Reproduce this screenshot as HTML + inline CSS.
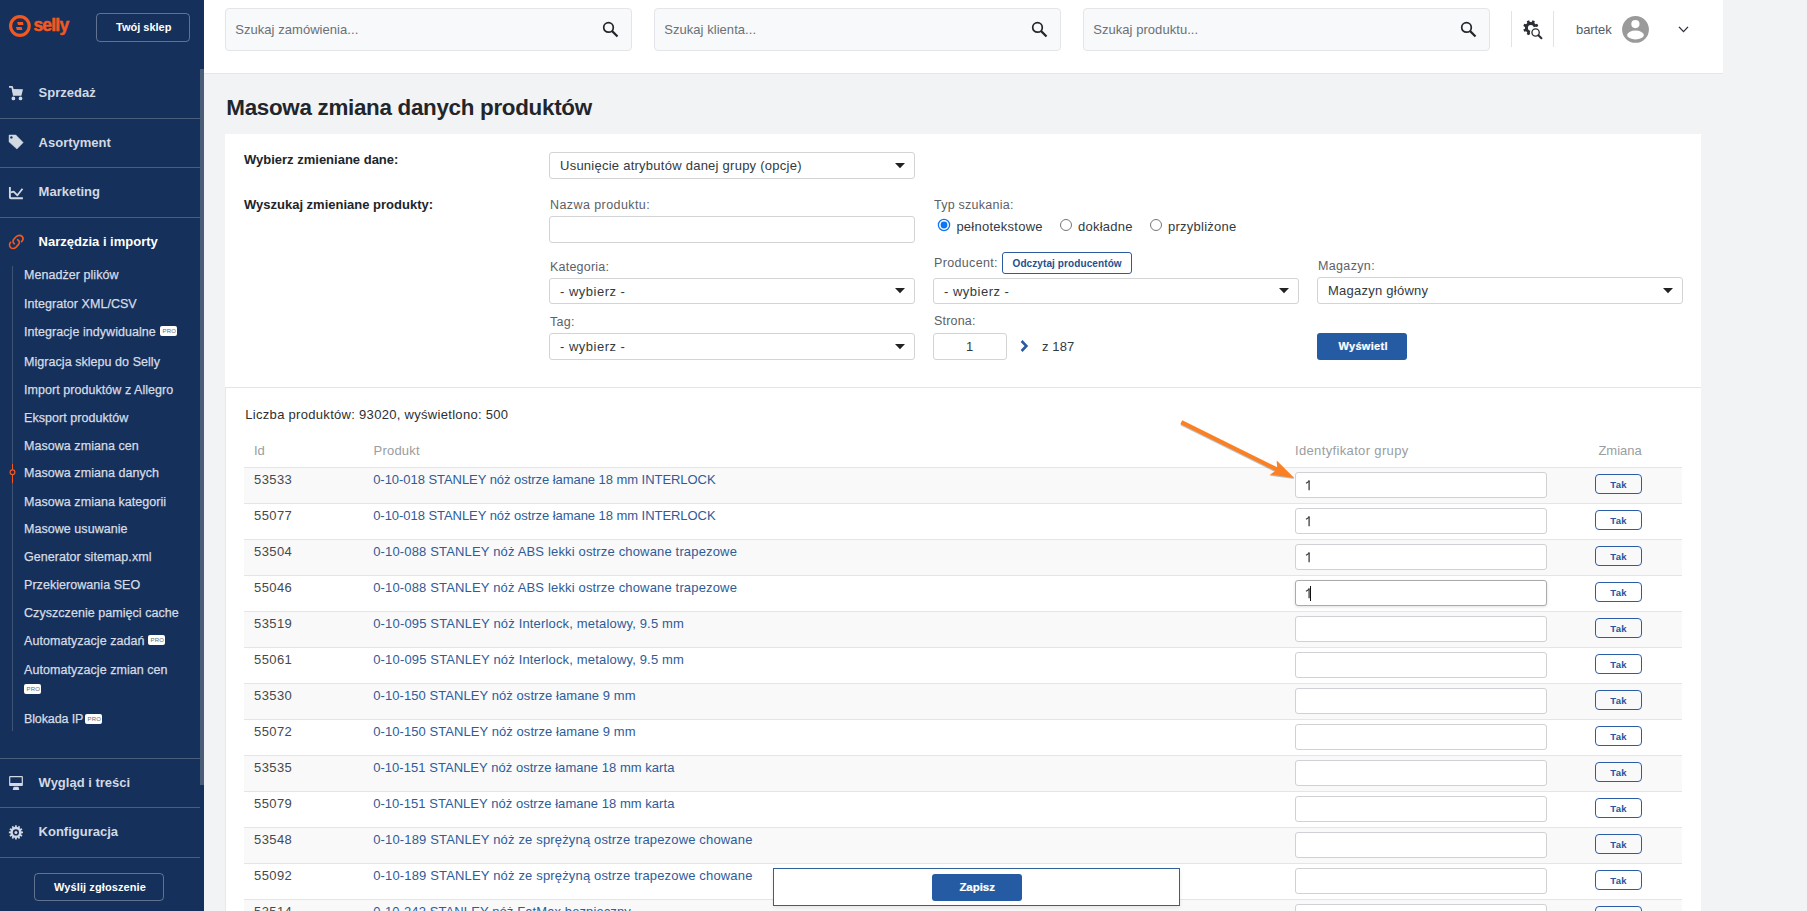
<!DOCTYPE html>
<html><head><meta charset="utf-8"><title>Masowa zmiana danych produktów</title>
<style>
html,body{margin:0;padding:0;}
body{width:1807px;height:911px;overflow:hidden;position:relative;background:#f2f3f5;font-family:"Liberation Sans", sans-serif;}
.t{position:absolute;white-space:pre;line-height:normal;}
.b{position:absolute;box-sizing:border-box;}
svg{position:absolute;overflow:visible;}
</style></head><body>
<div class="b" style="left:0px;top:0px;width:204px;height:911px;background:#15305a;"></div>
<div class="b" style="left:200px;top:69px;width:4px;height:716px;background:#495c78;"></div>
<svg style="left:0;top:0" width="80" height="50"><circle cx="19.9" cy="26" r="9.3" fill="none" stroke="#f2581f" stroke-width="3.2"/><path d="M17.2 22.0 L23.0 22.0 L23.5 24.9 L18.0 24.9 Z" fill="#f2581f"/><path d="M16.0 27.0 L21.7 27.0 L22.4 29.9 L16.8 29.9 Z" fill="#f2581f"/></svg>
<div class="t" style="left:33.4px;top:15.16px;font-size:17.5px;font-weight:bold;color:#f2581f;letter-spacing:-0.8px;-webkit-text-stroke:0.5px #f2581f;">selly</div>
<div class="b" style="left:96px;top:13px;width:94px;height:29px;border:1px solid rgba(255,255,255,0.32);border-radius:4px;"></div>
<div class="t" style="left:116px;top:20.95px;font-size:11px;font-weight:bold;color:#ffffff;letter-spacing:0px;">Twój sklep</div>
<div class="b" style="left:0px;top:118px;width:200px;height:1px;background:#4a5d7a;"></div>
<div class="b" style="left:0px;top:167px;width:200px;height:1px;background:#4a5d7a;"></div>
<div class="b" style="left:0px;top:217px;width:200px;height:1px;background:#4a5d7a;"></div>
<div class="b" style="left:0px;top:758px;width:200px;height:1px;background:#4a5d7a;"></div>
<div class="b" style="left:0px;top:807px;width:200px;height:1px;background:#4a5d7a;"></div>
<div class="b" style="left:0px;top:857px;width:200px;height:1px;background:#4a5d7a;"></div>
<div class="t" style="left:38.6px;top:85.03px;font-size:13px;font-weight:bold;color:#d3d9e2;letter-spacing:0px;">Sprzedaż</div>
<div class="t" style="left:38.6px;top:134.74px;font-size:13px;font-weight:bold;color:#d3d9e2;letter-spacing:0px;">Asortyment</div>
<div class="t" style="left:38.6px;top:184.44px;font-size:13px;font-weight:bold;color:#d3d9e2;letter-spacing:0px;">Marketing</div>
<div class="t" style="left:38.6px;top:234.13px;font-size:13px;font-weight:bold;color:#ffffff;letter-spacing:0px;">Narzędzia i importy</div>
<div class="t" style="left:38.6px;top:775.03px;font-size:13px;font-weight:bold;color:#d3d9e2;letter-spacing:0px;">Wygląd i treści</div>
<div class="t" style="left:38.6px;top:823.84px;font-size:13px;font-weight:bold;color:#d3d9e2;letter-spacing:0px;">Konfiguracja</div>
<svg style="left:9px;top:85px" width="15" height="15" viewBox="0 0 15 15"><path d="M0 1.9 L3.1 1.9 L4.4 7.5" fill="none" stroke="#d3d9e2" stroke-width="1.8" stroke-linejoin="round"/><path d="M3.1 3.9 L14 4.2 L12.4 10.8 L3.9 10.8 Z" fill="#d3d9e2"/><circle cx="4.4" cy="13.4" r="1.85" fill="#d3d9e2"/><circle cx="11.5" cy="13.4" r="1.85" fill="#d3d9e2"/></svg>
<svg style="left:9px;top:134px" width="15" height="16" viewBox="0 0 15 16"><path d="M0.1 1 L6.8 1 L14.2 8.6 L7.9 15 L0 7.85 Z" fill="#d3d9e2" stroke="#d3d9e2" stroke-width="0.5" stroke-linejoin="round"/><circle cx="2.4" cy="3.4" r="1.2" fill="#15305a"/></svg>
<svg style="left:9px;top:186px" width="15" height="15" viewBox="0 0 15 15"><path d="M0.9 1.1 L0.9 11.2 Q0.9 12.2 1.9 12.2 L13.9 12.2" fill="none" stroke="#d3d9e2" stroke-width="1.9"/><path d="M1.7 6.4 L4.7 5.6 L8.4 9.3 L13.5 2.7" fill="none" stroke="#d3d9e2" stroke-width="1.8" stroke-linejoin="round"/></svg>
<svg style="left:9px;top:234px" width="16" height="16" viewBox="0 0 16 16"><path d="M5.3 9.7 C3.6 8.6 3.6 6.6 5 5.0 L7.4 2.5 C9 0.9 11.6 0.9 13 2.4 C14.3 3.8 14.2 6 12.6 7.6" stroke="#f2581f" stroke-width="1.7" fill="none" stroke-linecap="round"/><path d="M1.6 8.3 C0.2 9.8 0.3 12.2 1.6 13.5 C3 14.9 5.4 14.8 6.9 13.3 L9.4 10.6 C10.9 9 10.6 6.9 8.6 5.7" stroke="#f2581f" stroke-width="1.7" fill="none" stroke-linecap="round"/></svg>
<svg style="left:9px;top:776px" width="15" height="15" viewBox="0 0 15 15"><path fill-rule="evenodd" d="M1.1 0 L12.9 0 Q13.9 0 13.9 1 L13.9 9 Q13.9 10 12.9 10 L1.1 10 Q0.1 10 0.1 9 L0.1 1 Q0.1 0 1.1 0 Z M1.3 1.2 L1.3 7.0 L12.7 7.0 L12.7 1.2 Z" fill="#d3d9e2"/><path d="M4.7 10.8 L9.4 10.8 L10.2 13.2 Q10.3 14 9.6 14 L4.4 14 Q3.7 14 3.8 13.2 Z" fill="#d3d9e2"/></svg>
<svg style="left:9px;top:825px" width="15" height="15" viewBox="0 0 15 15"><polygon points="6.05,1.85 6.10,0.33 7.76,0.33 7.81,1.85 8.94,2.15 9.73,0.86 11.18,1.69 10.45,3.03 11.28,3.86 12.62,3.13 13.45,4.58 12.16,5.37 12.46,6.50 13.98,6.55 13.98,8.21 12.46,8.26 12.16,9.39 13.45,10.18 12.62,11.63 11.28,10.90 10.45,11.73 11.18,13.07 9.73,13.90 8.94,12.61 7.81,12.91 7.76,14.43 6.10,14.43 6.05,12.91 4.92,12.61 4.13,13.90 2.68,13.07 3.41,11.73 2.58,10.90 1.24,11.63 0.41,10.18 1.70,9.39 1.40,8.26 -0.12,8.21 -0.12,6.55 1.40,6.50 1.70,5.37 0.41,4.58 1.24,3.13 2.58,3.86 3.41,3.03 2.68,1.69 4.13,0.86 4.92,2.15" fill="#d3d9e2"/><circle cx="6.93" cy="7.38" r="3.1" fill="#15305a"/><circle cx="6.93" cy="7.38" r="1.5" fill="#d3d9e2"/></svg>
<div class="b" style="left:12px;top:266px;width:1px;height:465px;background:#3f5474;"></div>
<div class="b" style="left:12px;top:464px;width:1px;height:19px;background:#f2581f;"></div>
<svg style="left:0;top:0" width="30" height="500"><circle cx="12.5" cy="472.3" r="2.4" fill="#15305a" stroke="#f2581f" stroke-width="1.2"/></svg>
<div class="t" style="left:24px;top:268.39px;font-size:12.5px;font-weight:normal;color:#d6dce5;letter-spacing:0.05px;-webkit-text-stroke:0.25px #d6dce5;">Menadżer plików</div>
<div class="t" style="left:24px;top:296.59px;font-size:12.5px;font-weight:normal;color:#d6dce5;letter-spacing:0.05px;-webkit-text-stroke:0.25px #d6dce5;">Integrator XML/CSV</div>
<div class="t" style="left:24px;top:324.59px;font-size:12.5px;font-weight:normal;color:#d6dce5;letter-spacing:0.05px;-webkit-text-stroke:0.25px #d6dce5;">Integracje indywidualne</div>
<div class="b" style="left:160px;top:326px;width:17px;height:10px;background:#fff;border-radius:2px;"></div>
<div class="t" style="left:162.6px;top:327.67px;font-size:6px;font-weight:normal;color:#5f6876;letter-spacing:0.15px;">PRO</div>
<div class="t" style="left:24px;top:354.79px;font-size:12.5px;font-weight:normal;color:#d6dce5;letter-spacing:0.05px;-webkit-text-stroke:0.25px #d6dce5;">Migracja sklepu do Selly</div>
<div class="t" style="left:24px;top:382.79px;font-size:12.5px;font-weight:normal;color:#d6dce5;letter-spacing:0.05px;-webkit-text-stroke:0.25px #d6dce5;">Import produktów z Allegro</div>
<div class="t" style="left:24px;top:410.59px;font-size:12.5px;font-weight:normal;color:#d6dce5;letter-spacing:0.05px;-webkit-text-stroke:0.25px #d6dce5;">Eksport produktów</div>
<div class="t" style="left:24px;top:438.59px;font-size:12.5px;font-weight:normal;color:#d6dce5;letter-spacing:0.05px;-webkit-text-stroke:0.25px #d6dce5;">Masowa zmiana cen</div>
<div class="t" style="left:24px;top:466.19px;font-size:12.5px;font-weight:normal;color:#d6dce5;letter-spacing:0.05px;-webkit-text-stroke:0.25px #d6dce5;">Masowa zmiana danych</div>
<div class="t" style="left:24px;top:494.59px;font-size:12.5px;font-weight:normal;color:#d6dce5;letter-spacing:0.05px;-webkit-text-stroke:0.25px #d6dce5;">Masowa zmiana kategorii</div>
<div class="t" style="left:24px;top:521.59px;font-size:12.5px;font-weight:normal;color:#d6dce5;letter-spacing:0.05px;-webkit-text-stroke:0.25px #d6dce5;">Masowe usuwanie</div>
<div class="t" style="left:24px;top:549.59px;font-size:12.5px;font-weight:normal;color:#d6dce5;letter-spacing:0.05px;-webkit-text-stroke:0.25px #d6dce5;">Generator sitemap.xml</div>
<div class="t" style="left:24px;top:577.59px;font-size:12.5px;font-weight:normal;color:#d6dce5;letter-spacing:0.05px;-webkit-text-stroke:0.25px #d6dce5;">Przekierowania SEO</div>
<div class="t" style="left:24px;top:605.79px;font-size:12.5px;font-weight:normal;color:#d6dce5;letter-spacing:0.05px;-webkit-text-stroke:0.25px #d6dce5;">Czyszczenie pamięci cache</div>
<div class="t" style="left:24px;top:633.79px;font-size:12.5px;font-weight:normal;color:#d6dce5;letter-spacing:0.05px;-webkit-text-stroke:0.25px #d6dce5;">Automatyzacje zadań</div>
<div class="b" style="left:148px;top:635px;width:17px;height:10px;background:#fff;border-radius:2px;"></div>
<div class="t" style="left:150.6px;top:636.67px;font-size:6px;font-weight:normal;color:#5f6876;letter-spacing:0.15px;">PRO</div>
<div class="t" style="left:24px;top:663.39px;font-size:12.5px;font-weight:normal;color:#d6dce5;letter-spacing:0.05px;-webkit-text-stroke:0.25px #d6dce5;">Automatyzacje zmian cen</div>
<div class="b" style="left:24px;top:684px;width:17px;height:10px;background:#fff;border-radius:2px;"></div>
<div class="t" style="left:26.6px;top:685.67px;font-size:6px;font-weight:normal;color:#5f6876;letter-spacing:0.15px;">PRO</div>
<div class="t" style="left:24px;top:712.19px;font-size:12.5px;font-weight:normal;color:#d6dce5;letter-spacing:-0.12px;-webkit-text-stroke:0.25px #d6dce5;">Blokada IP</div>
<div class="b" style="left:85px;top:714px;width:17px;height:10px;background:#fff;border-radius:2px;"></div>
<div class="t" style="left:87.6px;top:715.67px;font-size:6px;font-weight:normal;color:#5f6876;letter-spacing:0.15px;">PRO</div>
<div class="b" style="left:34px;top:873px;width:130px;height:28px;border:1px solid rgba(255,255,255,0.32);border-radius:4px;"></div>
<div class="t" style="left:54px;top:881.44px;font-size:11px;font-weight:bold;color:#ffffff;letter-spacing:0.1px;">Wyślij zgłoszenie</div>
<div class="b" style="left:204px;top:0px;width:1519px;height:73px;background:#fff;"></div>
<div class="b" style="left:204px;top:73px;width:1519px;height:1px;background:#e4e6e9;"></div>
<div class="b" style="left:225px;top:8px;width:407px;height:43px;background:#f8f9fa;border:1px solid #e3e5e8;border-radius:4px;"></div>
<div class="t" style="left:235.2px;top:22.44px;font-size:13px;font-weight:normal;color:#6b7075;letter-spacing:0.05px;">Szukaj zamówienia...</div>
<svg style="left:603px;top:18px" width="18" height="22" viewBox="0 0 18 22"><circle cx="5.5" cy="9.4" r="4.8" fill="none" stroke="#23262b" stroke-width="1.7"/><path d="M8.9 12.9 L14.5 18.5" stroke="#23262b" stroke-width="2.2" stroke-linecap="butt"/></svg>
<div class="b" style="left:654px;top:8px;width:407px;height:43px;background:#f8f9fa;border:1px solid #e3e5e8;border-radius:4px;"></div>
<div class="t" style="left:664.2px;top:22.44px;font-size:13px;font-weight:normal;color:#6b7075;letter-spacing:0.05px;">Szukaj klienta...</div>
<svg style="left:1032px;top:18px" width="18" height="22" viewBox="0 0 18 22"><circle cx="5.5" cy="9.4" r="4.8" fill="none" stroke="#23262b" stroke-width="1.7"/><path d="M8.9 12.9 L14.5 18.5" stroke="#23262b" stroke-width="2.2" stroke-linecap="butt"/></svg>
<div class="b" style="left:1083px;top:8px;width:407px;height:43px;background:#f8f9fa;border:1px solid #e3e5e8;border-radius:4px;"></div>
<div class="t" style="left:1093.2px;top:22.44px;font-size:13px;font-weight:normal;color:#6b7075;letter-spacing:0.05px;">Szukaj produktu...</div>
<svg style="left:1461px;top:18px" width="18" height="22" viewBox="0 0 18 22"><circle cx="5.5" cy="9.4" r="4.8" fill="none" stroke="#23262b" stroke-width="1.7"/><path d="M8.9 12.9 L14.5 18.5" stroke="#23262b" stroke-width="2.2" stroke-linecap="butt"/></svg>
<div class="b" style="left:1511px;top:11px;width:1px;height:36px;background:#e1e3e6;"></div>
<div class="b" style="left:1553px;top:11px;width:1px;height:36px;background:#e1e3e6;"></div>
<svg style="left:1522px;top:19px" width="22" height="22" viewBox="0 0 22 22"><polygon points="9.68,2.97 10.54,1.30 12.87,2.27 12.31,4.05 13.55,5.29 15.33,4.73 16.30,7.06 14.63,7.92 14.63,9.68 16.30,10.54 15.33,12.87 13.55,12.31 12.31,13.55 12.87,15.33 10.54,16.30 9.68,14.63 7.92,14.63 7.06,16.30 4.73,15.33 5.29,13.55 4.05,12.31 2.27,12.87 1.30,10.54 2.97,9.68 2.97,7.92 1.30,7.06 2.27,4.73 4.05,5.29 5.29,4.05 4.73,2.27 7.06,1.30 7.92,2.97" fill="#2b2f35"/><circle cx="8.8" cy="8.8" r="2.9" fill="#ffffff"/><circle cx="13.6" cy="13.45" r="5.7" fill="#fff"/><circle cx="13.6" cy="13.45" r="3.65" fill="none" stroke="#2b2f35" stroke-width="1.35"/><path d="M16.4 16.3 L19.4 19.2" stroke="#2b2f35" stroke-width="2.1" stroke-linecap="round"/></svg>
<div class="t" style="left:1576px;top:22.23px;font-size:13px;font-weight:normal;color:#555b61;letter-spacing:-0.1px;">bartek</div>
<svg style="left:1621px;top:16px" width="28" height="28" viewBox="0 0 28 28"><circle cx="14.5" cy="13.4" r="13.4" fill="#9a9a9a"/><circle cx="14.4" cy="8.05" r="4.1" fill="#fff"/><ellipse cx="14.5" cy="19" rx="8.4" ry="4.4" fill="#fff"/></svg>
<svg style="left:1677px;top:24px" width="14" height="10" viewBox="0 0 14 10"><path d="M2 2.9 L6.5 7.6 L11 2.9" fill="none" stroke="#2b2f35" stroke-width="1.35"/></svg>
<div class="t" style="left:226.3px;top:94.93px;font-size:22.4px;font-weight:bold;color:#22262b;letter-spacing:-0.3px;">Masowa zmiana danych produktów</div>
<div class="b" style="left:225px;top:134px;width:1476px;height:254px;background:#fff;"></div>
<div class="b" style="left:225px;top:387px;width:1476px;height:1px;background:#e2e5e9;"></div>
<div class="t" style="left:244px;top:152.04px;font-size:13px;font-weight:bold;color:#212529;letter-spacing:0px;">Wybierz zmieniane dane:</div>
<div class="t" style="left:244px;top:197.04px;font-size:13px;font-weight:bold;color:#212529;letter-spacing:0px;">Wyszukaj zmieniane produkty:</div>
<div class="b" style="left:549px;top:152px;width:366px;height:27px;background:#fff;border:1px solid #d3d4d6;border-radius:3px;"></div>
<div class="t" style="left:560px;top:158.04px;font-size:13px;font-weight:normal;color:#333a40;letter-spacing:0.25px;">Usunięcie atrybutów danej grupy (opcje)</div>
<svg style="left:895px;top:162.5px" width="10" height="6" viewBox="0 0 10 6"><path d="M0 0 L10 0 L5 5.2 Z" fill="#222"/></svg>
<div class="t" style="left:550px;top:197.89px;font-size:12.5px;font-weight:normal;color:#5c6166;letter-spacing:0.42px;">Nazwa produktu:</div>
<div class="b" style="left:549px;top:216px;width:366px;height:27px;background:#fff;border:1px solid #d3d4d6;border-radius:3px;"></div>
<div class="t" style="left:550px;top:260.09px;font-size:12.5px;font-weight:normal;color:#5c6166;letter-spacing:0.22px;">Kategoria:</div>
<div class="b" style="left:549px;top:278px;width:366px;height:26px;background:#fff;border:1px solid #d3d4d6;border-radius:3px;"></div>
<div class="t" style="left:560px;top:284.04px;font-size:13px;font-weight:normal;color:#333a40;letter-spacing:0.5px;">- wybierz -</div>
<svg style="left:895px;top:288.0px" width="10" height="6" viewBox="0 0 10 6"><path d="M0 0 L10 0 L5 5.2 Z" fill="#222"/></svg>
<div class="t" style="left:550px;top:314.69px;font-size:12.5px;font-weight:normal;color:#5c6166;letter-spacing:0.3px;">Tag:</div>
<div class="b" style="left:549px;top:333px;width:366px;height:27px;background:#fff;border:1px solid #d3d4d6;border-radius:3px;"></div>
<div class="t" style="left:560px;top:339.04px;font-size:13px;font-weight:normal;color:#333a40;letter-spacing:0.5px;">- wybierz -</div>
<svg style="left:895px;top:343.5px" width="10" height="6" viewBox="0 0 10 6"><path d="M0 0 L10 0 L5 5.2 Z" fill="#222"/></svg>
<div class="t" style="left:934px;top:197.99px;font-size:12.5px;font-weight:normal;color:#5c6166;letter-spacing:0.25px;">Typ szukania:</div>
<svg style="left:937px;top:218px" width="14" height="14" viewBox="0 0 14 14"><circle cx="7" cy="7" r="5.6" fill="#fff" stroke="#0b75f5" stroke-width="1.3"/><circle cx="7" cy="7" r="3.4" fill="#0b75f5"/></svg>
<div class="t" style="left:956.4px;top:218.94px;font-size:13px;font-weight:normal;color:#333a40;letter-spacing:0.25px;">pełnotekstowe</div>
<svg style="left:1059px;top:218px" width="14" height="14" viewBox="0 0 14 14"><circle cx="7" cy="7" r="5.5" fill="#fff" stroke="#767676" stroke-width="1"/></svg>
<div class="t" style="left:1078px;top:218.94px;font-size:13px;font-weight:normal;color:#333a40;letter-spacing:0.25px;">dokładne</div>
<svg style="left:1149px;top:218px" width="14" height="14" viewBox="0 0 14 14"><circle cx="7" cy="7" r="5.5" fill="#fff" stroke="#767676" stroke-width="1"/></svg>
<div class="t" style="left:1168px;top:218.94px;font-size:13px;font-weight:normal;color:#333a40;letter-spacing:0.25px;">przybliżone</div>
<div class="t" style="left:934px;top:256.09px;font-size:12.5px;font-weight:normal;color:#5c6166;letter-spacing:0.34px;">Producent:</div>
<div class="b" style="left:1002px;top:252px;width:130px;height:22px;border:1.3px solid #2c5ba0;border-radius:3px;"></div>
<div class="t" style="left:1012.5px;top:258.25px;font-size:10px;font-weight:bold;color:#23508f;letter-spacing:0.1px;">Odczytaj producentów</div>
<div class="b" style="left:933px;top:278px;width:366px;height:26px;background:#fff;border:1px solid #d3d4d6;border-radius:3px;"></div>
<div class="t" style="left:944px;top:284.04px;font-size:13px;font-weight:normal;color:#333a40;letter-spacing:0.5px;">- wybierz -</div>
<svg style="left:1279px;top:288.0px" width="10" height="6" viewBox="0 0 10 6"><path d="M0 0 L10 0 L5 5.2 Z" fill="#222"/></svg>
<div class="t" style="left:934px;top:314.29px;font-size:12.5px;font-weight:normal;color:#5c6166;letter-spacing:0.18px;">Strona:</div>
<div class="b" style="left:933px;top:333px;width:74px;height:27px;background:#fff;border:1px solid #d3d4d6;border-radius:3px;"></div>
<div class="t" style="left:966px;top:339.24px;font-size:13px;font-weight:normal;color:#333a40;letter-spacing:0px;">1</div>
<svg style="left:1018px;top:339px" width="12" height="14" viewBox="0 0 12 14"><path d="M3.6 2 L8.4 7 L3.6 12" fill="none" stroke="#2c5ba0" stroke-width="2.6"/></svg>
<div class="t" style="left:1042px;top:339.24px;font-size:13px;font-weight:normal;color:#333a40;letter-spacing:0.1px;">z 187</div>
<div class="t" style="left:1318px;top:259.09px;font-size:12.5px;font-weight:normal;color:#5c6166;letter-spacing:0.35px;">Magazyn:</div>
<div class="b" style="left:1317px;top:277px;width:366px;height:27px;background:#fff;border:1px solid #d3d4d6;border-radius:3px;"></div>
<div class="t" style="left:1328px;top:283.04px;font-size:13px;font-weight:normal;color:#333a40;letter-spacing:0.25px;">Magazyn główny</div>
<svg style="left:1663px;top:287.5px" width="10" height="6" viewBox="0 0 10 6"><path d="M0 0 L10 0 L5 5.2 Z" fill="#222"/></svg>
<div class="b" style="left:1317px;top:333px;width:90px;height:27px;background:#245ba3;border-radius:3px;"></div>
<div class="t" style="left:1338.5px;top:339.65px;font-size:11px;font-weight:bold;color:#ffffff;letter-spacing:0.3px;-webkit-text-stroke:0.2px #fff;">Wyświetl</div>
<div class="b" style="left:225px;top:388px;width:1476px;height:523px;background:#fff;border-left:1px solid #e6e8eb;"></div>
<div class="t" style="left:245.3px;top:407.24px;font-size:13px;font-weight:normal;color:#2b2f33;letter-spacing:0.3px;">Liczba produktów: 93020, wyświetlono: 500</div>
<div class="t" style="left:254px;top:443.13px;font-size:13px;font-weight:normal;color:#9a9da1;letter-spacing:0px;">Id</div>
<div class="t" style="left:373.6px;top:443.13px;font-size:13px;font-weight:normal;color:#9a9da1;letter-spacing:0.2px;">Produkt</div>
<div class="t" style="left:1295px;top:443.13px;font-size:13px;font-weight:normal;color:#9a9da1;letter-spacing:0.35px;">Identyfikator grupy</div>
<div class="t" style="left:1598.4px;top:443.13px;font-size:13px;font-weight:normal;color:#9a9da1;letter-spacing:0px;">Zmiana</div>
<div class="b" style="left:244px;top:467px;width:1438px;height:1px;background:#e3e6e9;"></div>
<div class="b" style="left:244px;top:468px;width:1438px;height:35px;background:#f9f9f9;"></div>
<div class="b" style="left:244px;top:503px;width:1438px;height:1px;background:#e3e6e9;"></div>
<div class="t" style="left:254px;top:472.24px;font-size:13px;font-weight:normal;color:#45494d;letter-spacing:0.4px;">53533</div>
<div class="t" style="left:373.2px;top:472.24px;font-size:13px;font-weight:normal;color:#2e5c99;letter-spacing:-0.05px;">0-10-018 STANLEY nóż ostrze łamane 18 mm INTERLOCK</div>
<div class="b" style="left:1295px;top:472px;width:252px;height:26px;background:#fff;border:1px solid #cfd1d4;border-radius:3px;"></div>
<svg style="left:1304px;top:478px" width="8" height="14" viewBox="0 0 8 14"><path d="M5.1 2.5 L5.1 12.2" stroke="#3a3f44" stroke-width="1.3" fill="none"/><path d="M1.9 5.2 Q4 4.4 5.3 2.6" stroke="#3a3f44" stroke-width="1.15" fill="none"/></svg>
<div class="b" style="left:1595px;top:474px;width:47px;height:20px;border:1.5px solid #2a5ca8;border-radius:4px;"></div>
<div class="t" style="left:1610.3px;top:479.40px;font-size:9.5px;font-weight:bold;color:#23559d;letter-spacing:0.3px;">Tak</div>
<div class="b" style="left:244px;top:539px;width:1438px;height:1px;background:#e3e6e9;"></div>
<div class="t" style="left:254px;top:508.24px;font-size:13px;font-weight:normal;color:#45494d;letter-spacing:0.4px;">55077</div>
<div class="t" style="left:373.2px;top:508.24px;font-size:13px;font-weight:normal;color:#2e5c99;letter-spacing:-0.05px;">0-10-018 STANLEY nóż ostrze łamane 18 mm INTERLOCK</div>
<div class="b" style="left:1295px;top:508px;width:252px;height:26px;background:#fff;border:1px solid #cfd1d4;border-radius:3px;"></div>
<svg style="left:1304px;top:514px" width="8" height="14" viewBox="0 0 8 14"><path d="M5.1 2.5 L5.1 12.2" stroke="#3a3f44" stroke-width="1.3" fill="none"/><path d="M1.9 5.2 Q4 4.4 5.3 2.6" stroke="#3a3f44" stroke-width="1.15" fill="none"/></svg>
<div class="b" style="left:1595px;top:510px;width:47px;height:20px;border:1.5px solid #2a5ca8;border-radius:4px;"></div>
<div class="t" style="left:1610.3px;top:515.40px;font-size:9.5px;font-weight:bold;color:#23559d;letter-spacing:0.3px;">Tak</div>
<div class="b" style="left:244px;top:540px;width:1438px;height:35px;background:#f9f9f9;"></div>
<div class="b" style="left:244px;top:575px;width:1438px;height:1px;background:#e3e6e9;"></div>
<div class="t" style="left:254px;top:544.24px;font-size:13px;font-weight:normal;color:#45494d;letter-spacing:0.4px;">53504</div>
<div class="t" style="left:373.2px;top:544.24px;font-size:13px;font-weight:normal;color:#2e5c99;letter-spacing:0.16px;">0-10-088 STANLEY nóż ABS lekki ostrze chowane trapezowe</div>
<div class="b" style="left:1295px;top:544px;width:252px;height:26px;background:#fff;border:1px solid #cfd1d4;border-radius:3px;"></div>
<svg style="left:1304px;top:550px" width="8" height="14" viewBox="0 0 8 14"><path d="M5.1 2.5 L5.1 12.2" stroke="#3a3f44" stroke-width="1.3" fill="none"/><path d="M1.9 5.2 Q4 4.4 5.3 2.6" stroke="#3a3f44" stroke-width="1.15" fill="none"/></svg>
<div class="b" style="left:1595px;top:546px;width:47px;height:20px;border:1.5px solid #2a5ca8;border-radius:4px;"></div>
<div class="t" style="left:1610.3px;top:551.40px;font-size:9.5px;font-weight:bold;color:#23559d;letter-spacing:0.3px;">Tak</div>
<div class="b" style="left:244px;top:611px;width:1438px;height:1px;background:#e3e6e9;"></div>
<div class="t" style="left:254px;top:580.24px;font-size:13px;font-weight:normal;color:#45494d;letter-spacing:0.4px;">55046</div>
<div class="t" style="left:373.2px;top:580.24px;font-size:13px;font-weight:normal;color:#2e5c99;letter-spacing:0.16px;">0-10-088 STANLEY nóż ABS lekki ostrze chowane trapezowe</div>
<div class="b" style="left:1295px;top:580px;width:252px;height:26px;background:#fff;border:1px solid #a9abae;border-radius:3px;box-shadow:0 1px 3px rgba(0,0,0,0.12);"></div>
<svg style="left:1304px;top:586px" width="8" height="14" viewBox="0 0 8 14"><path d="M5.1 2.5 L5.1 12.2" stroke="#3a3f44" stroke-width="1.3" fill="none"/><path d="M1.9 5.2 Q4 4.4 5.3 2.6" stroke="#3a3f44" stroke-width="1.15" fill="none"/></svg>
<div class="b" style="left:1310px;top:586px;width:1.2px;height:15px;background:#111;"></div>
<div class="b" style="left:1595px;top:582px;width:47px;height:20px;border:1.5px solid #2a5ca8;border-radius:4px;"></div>
<div class="t" style="left:1610.3px;top:587.40px;font-size:9.5px;font-weight:bold;color:#23559d;letter-spacing:0.3px;">Tak</div>
<div class="b" style="left:244px;top:612px;width:1438px;height:35px;background:#f9f9f9;"></div>
<div class="b" style="left:244px;top:647px;width:1438px;height:1px;background:#e3e6e9;"></div>
<div class="t" style="left:254px;top:616.24px;font-size:13px;font-weight:normal;color:#45494d;letter-spacing:0.4px;">53519</div>
<div class="t" style="left:373.2px;top:616.24px;font-size:13px;font-weight:normal;color:#2e5c99;letter-spacing:0.17px;">0-10-095 STANLEY nóż Interlock, metalowy, 9.5 mm</div>
<div class="b" style="left:1295px;top:616px;width:252px;height:26px;background:#fff;border:1px solid #cfd1d4;border-radius:3px;"></div>
<div class="b" style="left:1595px;top:618px;width:47px;height:20px;border:1.5px solid #2a5ca8;border-radius:4px;"></div>
<div class="t" style="left:1610.3px;top:623.40px;font-size:9.5px;font-weight:bold;color:#23559d;letter-spacing:0.3px;">Tak</div>
<div class="b" style="left:244px;top:683px;width:1438px;height:1px;background:#e3e6e9;"></div>
<div class="t" style="left:254px;top:652.24px;font-size:13px;font-weight:normal;color:#45494d;letter-spacing:0.4px;">55061</div>
<div class="t" style="left:373.2px;top:652.24px;font-size:13px;font-weight:normal;color:#2e5c99;letter-spacing:0.17px;">0-10-095 STANLEY nóż Interlock, metalowy, 9.5 mm</div>
<div class="b" style="left:1295px;top:652px;width:252px;height:26px;background:#fff;border:1px solid #cfd1d4;border-radius:3px;"></div>
<div class="b" style="left:1595px;top:654px;width:47px;height:20px;border:1.5px solid #2a5ca8;border-radius:4px;"></div>
<div class="t" style="left:1610.3px;top:659.40px;font-size:9.5px;font-weight:bold;color:#23559d;letter-spacing:0.3px;">Tak</div>
<div class="b" style="left:244px;top:684px;width:1438px;height:35px;background:#f9f9f9;"></div>
<div class="b" style="left:244px;top:719px;width:1438px;height:1px;background:#e3e6e9;"></div>
<div class="t" style="left:254px;top:688.24px;font-size:13px;font-weight:normal;color:#45494d;letter-spacing:0.4px;">53530</div>
<div class="t" style="left:373.2px;top:688.24px;font-size:13px;font-weight:normal;color:#2e5c99;letter-spacing:0.07px;">0-10-150 STANLEY nóż ostrze łamane 9 mm</div>
<div class="b" style="left:1295px;top:688px;width:252px;height:26px;background:#fff;border:1px solid #cfd1d4;border-radius:3px;"></div>
<div class="b" style="left:1595px;top:690px;width:47px;height:20px;border:1.5px solid #2a5ca8;border-radius:4px;"></div>
<div class="t" style="left:1610.3px;top:695.40px;font-size:9.5px;font-weight:bold;color:#23559d;letter-spacing:0.3px;">Tak</div>
<div class="b" style="left:244px;top:755px;width:1438px;height:1px;background:#e3e6e9;"></div>
<div class="t" style="left:254px;top:724.24px;font-size:13px;font-weight:normal;color:#45494d;letter-spacing:0.4px;">55072</div>
<div class="t" style="left:373.2px;top:724.24px;font-size:13px;font-weight:normal;color:#2e5c99;letter-spacing:0.07px;">0-10-150 STANLEY nóż ostrze łamane 9 mm</div>
<div class="b" style="left:1295px;top:724px;width:252px;height:26px;background:#fff;border:1px solid #cfd1d4;border-radius:3px;"></div>
<div class="b" style="left:1595px;top:726px;width:47px;height:20px;border:1.5px solid #2a5ca8;border-radius:4px;"></div>
<div class="t" style="left:1610.3px;top:731.40px;font-size:9.5px;font-weight:bold;color:#23559d;letter-spacing:0.3px;">Tak</div>
<div class="b" style="left:244px;top:756px;width:1438px;height:35px;background:#f9f9f9;"></div>
<div class="b" style="left:244px;top:791px;width:1438px;height:1px;background:#e3e6e9;"></div>
<div class="t" style="left:254px;top:760.24px;font-size:13px;font-weight:normal;color:#45494d;letter-spacing:0.4px;">53535</div>
<div class="t" style="left:373.2px;top:760.24px;font-size:13px;font-weight:normal;color:#2e5c99;letter-spacing:0.04px;">0-10-151 STANLEY nóż ostrze łamane 18 mm karta</div>
<div class="b" style="left:1295px;top:760px;width:252px;height:26px;background:#fff;border:1px solid #cfd1d4;border-radius:3px;"></div>
<div class="b" style="left:1595px;top:762px;width:47px;height:20px;border:1.5px solid #2a5ca8;border-radius:4px;"></div>
<div class="t" style="left:1610.3px;top:767.40px;font-size:9.5px;font-weight:bold;color:#23559d;letter-spacing:0.3px;">Tak</div>
<div class="b" style="left:244px;top:827px;width:1438px;height:1px;background:#e3e6e9;"></div>
<div class="t" style="left:254px;top:796.24px;font-size:13px;font-weight:normal;color:#45494d;letter-spacing:0.4px;">55079</div>
<div class="t" style="left:373.2px;top:796.24px;font-size:13px;font-weight:normal;color:#2e5c99;letter-spacing:0.04px;">0-10-151 STANLEY nóż ostrze łamane 18 mm karta</div>
<div class="b" style="left:1295px;top:796px;width:252px;height:26px;background:#fff;border:1px solid #cfd1d4;border-radius:3px;"></div>
<div class="b" style="left:1595px;top:798px;width:47px;height:20px;border:1.5px solid #2a5ca8;border-radius:4px;"></div>
<div class="t" style="left:1610.3px;top:803.40px;font-size:9.5px;font-weight:bold;color:#23559d;letter-spacing:0.3px;">Tak</div>
<div class="b" style="left:244px;top:828px;width:1438px;height:35px;background:#f9f9f9;"></div>
<div class="b" style="left:244px;top:863px;width:1438px;height:1px;background:#e3e6e9;"></div>
<div class="t" style="left:254px;top:832.24px;font-size:13px;font-weight:normal;color:#45494d;letter-spacing:0.4px;">53548</div>
<div class="t" style="left:373.2px;top:832.24px;font-size:13px;font-weight:normal;color:#2e5c99;letter-spacing:0.16px;">0-10-189 STANLEY nóż ze sprężyną ostrze trapezowe chowane</div>
<div class="b" style="left:1295px;top:832px;width:252px;height:26px;background:#fff;border:1px solid #cfd1d4;border-radius:3px;"></div>
<div class="b" style="left:1595px;top:834px;width:47px;height:20px;border:1.5px solid #2a5ca8;border-radius:4px;"></div>
<div class="t" style="left:1610.3px;top:839.40px;font-size:9.5px;font-weight:bold;color:#23559d;letter-spacing:0.3px;">Tak</div>
<div class="b" style="left:244px;top:899px;width:1438px;height:1px;background:#e3e6e9;"></div>
<div class="t" style="left:254px;top:868.24px;font-size:13px;font-weight:normal;color:#45494d;letter-spacing:0.4px;">55092</div>
<div class="t" style="left:373.2px;top:868.24px;font-size:13px;font-weight:normal;color:#2e5c99;letter-spacing:0.16px;">0-10-189 STANLEY nóż ze sprężyną ostrze trapezowe chowane</div>
<div class="b" style="left:1295px;top:868px;width:252px;height:26px;background:#fff;border:1px solid #cfd1d4;border-radius:3px;"></div>
<div class="b" style="left:1595px;top:870px;width:47px;height:20px;border:1.5px solid #2a5ca8;border-radius:4px;"></div>
<div class="t" style="left:1610.3px;top:875.40px;font-size:9.5px;font-weight:bold;color:#23559d;letter-spacing:0.3px;">Tak</div>
<div class="b" style="left:244px;top:900px;width:1438px;height:35px;background:#f9f9f9;"></div>
<div class="b" style="left:244px;top:935px;width:1438px;height:1px;background:#e3e6e9;"></div>
<div class="t" style="left:254px;top:904.24px;font-size:13px;font-weight:normal;color:#45494d;letter-spacing:0.4px;">53514</div>
<div class="t" style="left:373.2px;top:904.24px;font-size:13px;font-weight:normal;color:#2e5c99;letter-spacing:0.1px;">0-10-242 STANLEY nóż FatMax bezpieczny</div>
<div class="b" style="left:1295px;top:904px;width:252px;height:26px;background:#fff;border:1px solid #cfd1d4;border-radius:3px;"></div>
<div class="b" style="left:1595px;top:906px;width:47px;height:20px;border:1.5px solid #2a5ca8;border-radius:4px;"></div>
<div class="t" style="left:1610.3px;top:911.40px;font-size:9.5px;font-weight:bold;color:#23559d;letter-spacing:0.3px;">Tak</div>
<svg style="left:0;top:0" width="1807" height="911"><g transform="translate(1294.3,478) rotate(26.3)"><path d="M-126 -2.1 L-20 -2.1 L-23.5 -7.8 L0 0 L-23.5 7.8 L-20 2.1 L-126 2.1 Z" fill="rgba(0,0,0,0.25)" transform="translate(0.5,1)"/><path d="M-126 -2.1 L-20 -2.1 L-23.5 -7.8 L0 0 L-23.5 7.8 L-20 2.1 L-126 2.1 Z" fill="#fb7f23"/></g></svg>
<div class="b" style="left:773px;top:868px;width:407px;height:38px;background:#fff;border:1px solid #2e6099;box-shadow:0 2px 4px rgba(0,0,0,0.08);"></div>
<div class="b" style="left:932px;top:874px;width:90px;height:27px;background:#245ba3;border-radius:3px;"></div>
<div class="t" style="left:959.4px;top:881.09px;font-size:11.5px;font-weight:bold;color:#ffffff;letter-spacing:-0.05px;-webkit-text-stroke:0.2px #fff;">Zapisz</div>
</body></html>
